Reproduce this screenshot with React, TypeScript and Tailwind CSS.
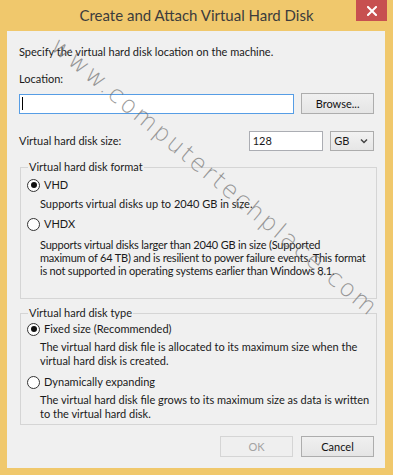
import React from "react";

const font = { fontFamily: 'Lato, "Liberation Sans", Arial, sans-serif' };

function Radio({ checked }: { checked?: boolean }) {
  return (
    <span className="w-[13px] h-[13px] rounded-full border border-[#333333] bg-white flex items-center justify-center shrink-0">
      {checked && <span className="w-[6px] h-[6px] rounded-full bg-[#111111]" />}
    </span>
  );
}

function Btn({ children, disabled }: { children: React.ReactNode; disabled?: boolean }) {
  return (
    <div
      className={
        disabled
          ? "w-[73px] h-[21px] border border-[#d5d5d5] bg-[#efefef] text-[#a3a3a3] flex items-center justify-center"
          : "w-[73px] h-[21px] border border-[#adadad] bg-gradient-to-b from-[#f0f0f0] to-[#e5e5e5] text-[#111] flex items-center justify-center"
      }
    >
      {children}
    </div>
  );
}

export default function App() {
  return (
    <div
      className="relative w-[393px] h-[475px] bg-[#f0c86c] overflow-hidden flex flex-col text-[11px] leading-[14px] text-[#1a1a1a]"
      style={font}
    >
      {/* title bar */}
      <div className="h-[31px] flex items-center justify-center text-[15px] text-[#3c3c3c] pb-[1px]">
        Create and Attach Virtual Hard Disk
      </div>
      <div className="absolute top-0 left-[356px] w-[31px] h-[21px] bg-[#c75050] flex items-center justify-center">
        <svg width="10" height="10" viewBox="0 0 10 10">
          <path d="M1 1 L9 9 M9 1 L1 9" stroke="white" strokeWidth="2" strokeLinecap="square" />
        </svg>
      </div>

      {/* panel */}
      <div className="ml-[7px] w-[378px] h-[437px] bg-[#f0f0f0] flex flex-col pl-[12px] pr-[11px]">
        <div className="mt-[14px]">Specify the virtual hard disk location on the machine.</div>
        <div className="mt-[13px]">Location:</div>
        <div className="mt-[7px] flex items-center gap-[7px]">
          <div className="w-[276px] h-[20px] bg-white border border-[#569de5] flex items-center pl-[2px]">
            <span className="w-[1px] h-[13px] bg-black" />
          </div>
          <Btn>Browse...</Btn>
        </div>
        <div className="mt-[17px] flex items-center h-[20px]">
          <div className="w-[231px]">Virtual hard disk size:</div>
          <div className="w-[75px] h-[20px] bg-white border border-[#abadb3] flex items-center pl-[3px]">128</div>
          <div className="ml-[7px] w-[44px] h-[20px] border border-[#acacac] bg-gradient-to-b from-[#f2f2f2] to-[#e6e6e6] flex items-center pl-[3px] justify-between pr-[5px]">
            <span>GB</span>
            <svg width="8" height="6" viewBox="0 0 8 6">
              <path d="M1 1.5 L4 4.5 L7 1.5" stroke="#444" strokeWidth="1.5" fill="none" />
            </svg>
          </div>
        </div>

        <fieldset className="mt-[9px] ml-[1px] w-[357px] border border-[#d5d5d5] pb-[21px]">
          <legend className="ml-[7px] px-[1px]">Virtual hard disk format</legend>
          <div className="mt-[4px] ml-[6px] flex items-center gap-[4px] h-[14px]">
            <Radio checked />
            <span>VHD</span>
          </div>
          <div className="mt-[5px] ml-[19px]">Supports virtual disks up to 2040 GB in size.</div>
          <div className="mt-[6px] ml-[6px] flex items-center gap-[4px] h-[14px]">
            <Radio />
            <span>VHDX</span>
          </div>
          <div className="mt-[7px] ml-[19px] leading-[13px] tracking-[-0.2px] whitespace-nowrap flex flex-col">
            <span>Supports virtual disks larger than 2040 GB in size (Supported</span>
            <span>maximum of 64 TB) and is resilient to power failure events. This format</span>
            <span>is not supported in operating systems earlier than Windows 8.1.</span>
          </div>
        </fieldset>

        <fieldset className="mt-[7px] ml-[1px] w-[357px] border border-[#d5d5d5] pb-[3px]">
          <legend className="ml-[7px] px-[1px]">Virtual hard disk type</legend>
          <div className="mt-[2px] ml-[6px] flex items-center gap-[4px] h-[14px]">
            <Radio checked />
            <span>Fixed size (Recommended)</span>
          </div>
          <div className="mt-[4px] ml-[19px] w-[334px]">
            The virtual hard disk file is allocated to its maximum size when the virtual hard disk is created.
          </div>
          <div className="mt-[7px] ml-[6px] flex items-center gap-[4px] h-[14px]">
            <Radio />
            <span>Dynamically expanding</span>
          </div>
          <div className="mt-[4px] ml-[19px] w-[334px]">
            The virtual hard disk file grows to its maximum size as data is written to the virtual hard disk.
          </div>
        </fieldset>

        <div className="mt-[11px] flex justify-end gap-[8px]">
          <Btn disabled>OK</Btn>
          <Btn>Cancel</Btn>
        </div>
      </div>

      {/* watermark */}
      <div
        className="absolute left-[215px] top-[177px] -translate-x-1/2 -translate-y-1/2 rotate-[40deg] whitespace-nowrap text-[24px] leading-[24px] tracking-[2.5px] text-[#707070] opacity-70 pointer-events-none"
        style={{ fontFamily: '"DejaVu Sans", sans-serif', fontWeight: 300 }}
      >
        www.computertechplace.com
      </div>
    </div>
  );
}
